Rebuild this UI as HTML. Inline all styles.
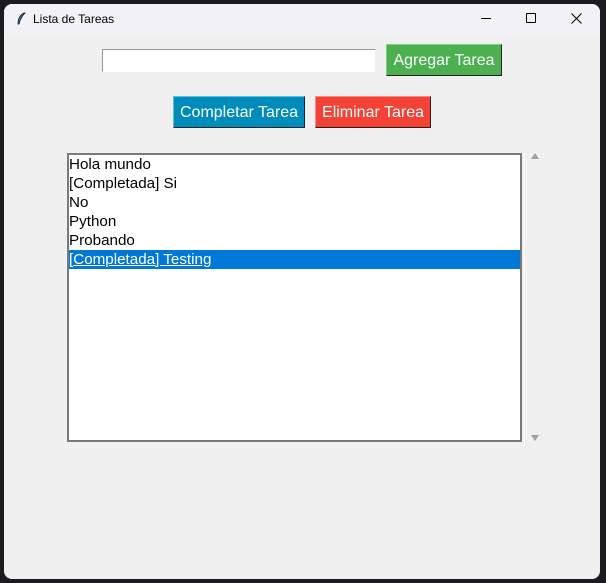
<!DOCTYPE html>
<html><head><style>
*{margin:0;padding:0;box-sizing:border-box}
body{width:606px;height:583px;background:#1c1c20;position:relative;overflow:hidden;font-family:"Liberation Sans",Arial,sans-serif}
.win{position:absolute;left:4px;top:4px;width:596px;height:575px;background:#f0f0f0;border-radius:8px;overflow:hidden}
.title{position:absolute;left:0;top:0;width:100%;height:30px;background:#f2f2f6}
.title span{position:absolute;left:29px;top:8px;font-size:12px;color:#000}
.abs{position:absolute}
.btn{position:absolute;color:#fff;font-size:16px;text-align:center;line-height:31px;border-right:1px solid #222;border-bottom:1px solid #222}
.lb{position:absolute;left:63px;top:149px;width:455px;height:289px;background:#fff;border:2px solid #7a7a7a}
.lb div{height:19px;line-height:19px;font-size:15.2px;padding-left:0;color:#000;white-space:nowrap}
.sel{background:#0078d7;color:#fff!important}
.sel u{color:#fff}
</style></head><body>
<div class="win">
<div class="title">
<svg class="abs" style="left:12px;top:8px" width="10" height="14" viewBox="0 0 10 14"><path d="M8 1 C4 3 2 7 2 12 L3 12 C4 8 6 4 9 1Z" fill="#3a7bd5" stroke="#111" stroke-width="0.8"/></svg>
<span>Lista de Tareas</span>
<div class="abs" style="left:477px;top:14px;width:10px;height:1px;background:#000"></div>
<div class="abs" style="left:522px;top:9px;width:10px;height:10px;border:1px solid #000;border-radius:1px"></div>
<svg class="abs" style="left:567px;top:9px" width="11" height="11"><path d="M0.5 0.5L10.5 10.5M10.5 0.5L0.5 10.5" stroke="#000" stroke-width="1"/></svg>
</div>
<div class="abs" style="left:98px;top:45px;width:274px;height:23px;background:#fff;border:1px solid #999;border-right-color:#eee;border-bottom-color:#fff"></div>
<div class="btn" style="left:382px;top:40px;width:116px;height:32px;background:#4caf50;border-left:1px solid #7ed081;border-top:1px solid #7ed081">Agregar Tarea</div>
<div class="btn" style="left:169px;top:92px;width:132px;height:32px;background:#008cba;border-left:1px solid #5bc0e6;border-top:1px solid #5bc0e6">Completar Tarea</div>
<div class="btn" style="left:311px;top:92px;width:116px;height:32px;background:#f44336;border-left:1px solid #f88;border-top:1px solid #f88">Eliminar Tarea</div>
<div class="lb">
<div>Hola mundo</div>
<div>[Completada] Si</div>
<div>No</div>
<div>Python</div>
<div>Probando</div>
<div class="sel"><u>[Completada] Testing</u></div>
</div>
<div class="abs" style="left:520px;top:148px;width:1px;height:294px;background:#fff"></div>
<svg class="abs" style="left:526px;top:148px" width="10" height="8"><path d="M5 1L9 7H1Z" fill="#a0a0a0"/></svg>
<svg class="abs" style="left:526px;top:430px" width="10" height="8"><path d="M5 7L9 1H1Z" fill="#a0a0a0"/></svg>
</div>
</body></html>
